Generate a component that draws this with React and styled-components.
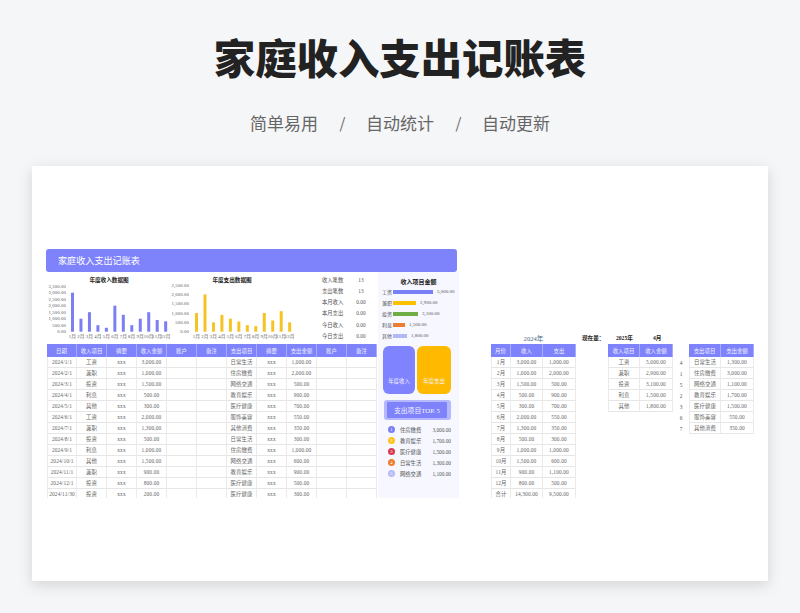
import React from 'react';
import styled, { createGlobalStyle } from 'styled-components';

const serif = `"Liberation Serif", "Noto Sans CJK SC", serif`;
const sans = `"Noto Sans CJK SC", "Liberation Sans", sans-serif`;

const GlobalStyle = createGlobalStyle`
  html, body {
    margin: 0;
    padding: 0;
    background: #f5f6f8;
  }
`;

const Page = styled.div`
  width: 800px;
  height: 613px;
  overflow: hidden;
  background: #f5f6f8;
  font-family: ${sans};
`;

const Hero = styled.header`
  height: 166px;
  display: flex;
  flex-direction: column;
  align-items: center;
`;

const Title = styled.h1`
  margin: 22px 0 0;
  font-size: 41.4px;
  line-height: 68px;
  font-weight: 900;
  color: #222;
`;

const Tagline = styled.div`
  margin-top: 20px;
  display: flex;
  align-items: center;
  gap: 21.5px;
  font-size: 17px;
  line-height: 26px;
  color: #666;
`;

const Slash = styled.span`
  font-size: 15px;
  width: 5px;
  text-align: center;
`;

const Sheet = styled.main`
  margin: 0 32px;
  height: 415px;
  box-sizing: border-box;
  padding: 83px 0 0 14px;
  background: #fff;
  box-shadow: 0 4px 14px rgba(0, 0, 0, 0.14);
  display: flex;
  align-items: flex-start;
  font-family: ${serif};
  color: #555;
`;

const Workbook = styled.section`
  width: 413px;
  flex: none;
`;

const Banner = styled.div`
  width: 411px;
  height: 23px;
  box-sizing: border-box;
  padding: 0 0 2px 12px;
  display: flex;
  align-items: center;
  background: #7f83fb;
  border-radius: 3px;
  color: #fff;
  font-family: ${sans};
  font-size: 9.1px;
`;

const Body = styled.div`
  display: flex;
  gap: 1px;
`;

const Main = styled.div`
  width: 331px;
  padding-left: 1px;
  box-sizing: border-box;
`;

const ChartRow = styled.div`
  height: 72px;
  display: flex;
`;

const Chart = styled.svg`
  display: block;
  flex: none;
  text {
    font-family: ${serif};
    font-size: 4.7px;
    letter-spacing: 0.15px;
    fill: #555;
  }
  .title {
    font-size: 5.6px;
    letter-spacing: 0;
    font-weight: 700;
    fill: #222;
  }
`;

const Stats = styled.div`
  margin-left: 24px;
  padding-top: 2.6px;
  width: 56px;
  display: grid;
  grid-template-columns: 24px 30px;
  grid-auto-rows: 11.1px;
  align-items: center;
  font-size: 5.3px;
  color: #555;
`;

const StatValue = styled.span`
  text-align: center;
`;

const Table = styled.div`
  display: grid;
  grid-template-columns: ${(p) => p.$cols};
  grid-template-rows: 13px;
  grid-auto-rows: 11px;
  height: ${(p) => (p.$height ? `${p.$height}px` : 'auto')};
  overflow: hidden;
  align-content: start;
`;

const HeadCell = styled.div`
  display: flex;
  align-items: center;
  justify-content: center;
  background: #7f83fb;
  border-right: 1px solid #a9acfc;
  box-sizing: border-box;
  color: #f2f2ff;
  font-size: 5.4px;
`;

const Cell = styled.div`
  display: flex;
  align-items: center;
  justify-content: center;
  box-sizing: border-box;
  border-right: 1px solid #ebebeb;
  border-bottom: 1px solid #e6e6e6;
  font-size: 5.4px;
  letter-spacing: 0.12px;
  white-space: nowrap;
  color: #666;
  &:nth-child(${(p) => p.$cols}n + 1) {
    border-left: 1px solid #ebebeb;
  }
`;

const Panel = styled.aside`
  width: 81px;
  height: 226px;
  box-sizing: border-box;
  background: #f6f7ff;
  padding: 6px 8px 0 4px;
  flex: none;
`;

const PanelTitle = styled.div`
  text-align: center;
  font-family: ${sans};
  font-size: 6px;
  line-height: 8px;
  font-weight: 700;
  color: #222;
  margin-left: 4px;
`;

const BarList = styled.div`
  display: grid;
  grid-auto-rows: 11px;
`;

const BarRow = styled.div`
  display: flex;
  align-items: center;
  font-size: 5px;
  color: #555;
`;

const BarLabel = styled.span`
  width: 11px;
  flex: none;
`;

const Bar = styled.span`
  height: 4px;
  margin-right: 4px;
  background: ${(p) => p.$color};
`;

const Cards = styled.div`
  margin: 5px 0 0 1px;
  display: flex;
  gap: 2px;
`;

const Card = styled.div`
  width: ${(p) => p.$width}px;
  height: 48px;
  box-sizing: border-box;
  padding-bottom: 9px;
  display: flex;
  align-items: flex-end;
  justify-content: center;
  background: ${(p) => p.$color};
  border-radius: 6px;
  color: #f4f4ff;
  font-size: 5.4px;
`;

const TopBadge = styled.div`
  margin: 6px 0 0 2px;
  width: 67px;
  height: 20px;
  box-sizing: border-box;
  padding: 2px 4px 2px 3px;
  background: #b5b8fb;
  border-radius: 3px;
`;

const TopLabel = styled.div`
  height: 100%;
  display: flex;
  align-items: center;
  justify-content: center;
  background: #7f83fb;
  border-radius: 1px;
  color: #f4f4ff;
  font-size: 6.8px;
`;

const RankList = styled.div`
  margin: 4px 0 0 6px;
  display: grid;
  grid-auto-rows: 11px;
`;

const RankRow = styled.div`
  display: flex;
  align-items: center;
  font-size: 5.3px;
  color: #555;
`;

const RankDot = styled.span`
  width: 7px;
  height: 7px;
  margin-right: 5px;
  flex: none;
  border-radius: 50%;
  background: ${(p) => p.$color};
  color: #fff;
  font-size: 4.6px;
  line-height: 7px;
  text-align: center;
`;

const RankValue = styled.span`
  margin-left: auto;
`;

const Side = styled.div`
  margin: 82px 0 0 32px;
  display: flex;
  align-items: flex-start;
`;

const YearColumn = styled.div`
  width: 85px;
  flex: none;
`;

const Caption = styled.div`
  height: 13px;
  display: flex;
  align-items: center;
  font-size: ${(p) => p.$size || 5.6}px;
  color: ${(p) => p.$color || '#222'};
  font-weight: ${(p) => p.$weight || 700};
  justify-content: ${(p) => (p.$center ? 'center' : 'flex-start')};
`;

const CaptionPart = styled.span`
  width: ${(p) => p.$width}px;
  flex: none;
`;

const NowColumn = styled.div`
  margin-left: 6px;
`;

const NowTables = styled.div`
  margin-left: 26px;
  display: flex;
`;

const RankColumn = styled.div`
  width: 16px;
  display: grid;
  grid-template-rows: 13px;
  grid-auto-rows: 11px;
  align-items: center;
  justify-items: center;
  font-size: 5.4px;
  color: #555;
`;

const BarChart = ({ title, titleX, width, ticks, unit, base, axisX, startX, color, values }) => (
  <Chart width={width} height={72} viewBox={`0 0 ${width} 72`}>
    <text className="title" x={titleX} y={10} textAnchor="middle">{title}</text>
    {ticks.map((t, i) => (
      <text key={t} x={axisX} y={base + 1.6 - i * unit} textAnchor="end">{t}</text>
    ))}
    {values.map((v, i) => {
      const h = (v / 500) * unit;
      return <rect key={i} x={startX + i * 8.47} y={base - h} width={3} height={h} fill={color} />;
    })}
    {values.map((_, i) => (
      <text key={i} x={startX + 1.5 + i * 8.47} y={65.6} textAnchor="middle">{i + 1}月</text>
    ))}
  </Chart>
);

const DataTable = ({ cols, count, head, rows, height }) => (
  <Table $cols={cols} $height={height}>
    {head.map((h, i) => <HeadCell key={i}>{h}</HeadCell>)}
    {rows.flat().map((c, i) => <Cell key={i} $cols={count}>{c}</Cell>)}
  </Table>
);

const income = [
  ['2024/1/1', '工资', '3,000.00'], ['2024/2/1', '兼职', '1,000.00'], ['2024/3/1', '投资', '1,500.00'],
  ['2024/4/1', '利息', '500.00'], ['2024/5/1', '其他', '300.00'], ['2024/6/1', '工资', '2,000.00'],
  ['2024/7/1', '兼职', '1,300.00'], ['2024/8/1', '投资', '500.00'], ['2024/9/1', '利息', '1,000.00'],
  ['2024/10/1', '其他', '1,500.00'], ['2024/11/1', '兼职', '900.00'], ['2024/12/1', '投资', '800.00'],
  ['2024/11/30', '投资', '200.00'],
];

const expense = [
  ['日常生活', '1,000.00'], ['住房缴费', '2,000.00'], ['网络交通', '500.00'], ['教育娱乐', '900.00'],
  ['医疗健康', '700.00'], ['服饰美容', '550.00'], ['其他消费', '350.00'], ['日常生活', '300.00'],
  ['住房缴费', '1,000.00'], ['网络交通', '600.00'], ['教育娱乐', '900.00'], ['医疗健康', '500.00'],
  ['医疗健康', '300.00'],
];

const ledger = income.map((r, i) => [
  r[0], r[1], 'xxx', r[2], '', '', expense[i][0], 'xxx', expense[i][1], '', '',
]);

const months = [
  ['1月', '3,000.00', '1,000.00'], ['2月', '1,000.00', '2,000.00'], ['3月', '1,500.00', '500.00'],
  ['4月', '500.00', '900.00'], ['5月', '300.00', '700.00'], ['6月', '2,000.00', '550.00'],
  ['7月', '1,300.00', '350.00'], ['8月', '500.00', '300.00'], ['9月', '1,000.00', '1,000.00'],
  ['10月', '1,500.00', '600.00'], ['11月', '900.00', '1,100.00'], ['12月', '800.00', '500.00'],
  ['合计', '14,300.00', '9,500.00'],
];

const incomeItems = [
  ['工资', '5,000.00'], ['兼职', '2,900.00'], ['投资', '3,100.00'], ['利息', '1,500.00'], ['其他', '1,800.00'],
];

const expenseItems = [
  ['日常生活', '1,300.00'], ['住房缴费', '3,000.00'], ['网络交通', '1,100.00'], ['教育娱乐', '1,700.00'],
  ['医疗健康', '1,500.00'], ['服饰美容', '550.00'], ['其他消费', '350.00'],
];

const incomeBars = [
  { label: '工资', value: '5,000.00', width: 40, color: '#7b7ff5' },
  { label: '兼职', value: '2,900.00', width: 23, color: '#ffc000' },
  { label: '投资', value: '3,100.00', width: 25, color: '#70ad47' },
  { label: '利息', value: '1,500.00', width: 12, color: '#ed7d31' },
  { label: '其他', value: '1,800.00', width: 14, color: '#b4b8f8' },
];

const topFive = [
  { name: '住房缴费', value: '3,000.00', color: '#7b7ff5' },
  { name: '教育娱乐', value: '1,700.00', color: '#ffc21a' },
  { name: '医疗健康', value: '1,500.00', color: '#d8384e' },
  { name: '日常生活', value: '1,300.00', color: '#ed7d31' },
  { name: '网络交通', value: '1,100.00', color: '#b8bbf8' },
];

const stats = [
  ['收入笔数', '13'], ['支出笔数', '13'], ['本月收入', '0.00'],
  ['本月支出', '0.00'], ['今日收入', '0.00'], ['今日支出', '0.00'],
];

export default function App() {
  return (
    <Page>
      <GlobalStyle />
      <Hero>
        <Title>家庭收入支出记账表</Title>
        <Tagline>
          <span>简单易用</span>
          <Slash>/</Slash>
          <span>自动统计</span>
          <Slash>/</Slash>
          <span>自动更新</span>
        </Tagline>
      </Hero>
      <Sheet>
        <Workbook>
          <Banner>家庭收入支出记账表</Banner>
          <Body>
            <Main>
              <ChartRow>
                <BarChart
                  title="年度收入数据图"
                  titleX={62}
                  width={124}
                  ticks={['0.00', '500.00', '1,000.00', '1,500.00', '2,000.00', '2,500.00', '3,000.00', '3,500.00']}
                  unit={6.5}
                  base={59.7}
                  axisX={19}
                  startX={24}
                  color="#7b7ff0"
                  values={[3000, 1000, 1500, 500, 300, 2000, 1300, 500, 1000, 1500, 900, 800]}
                />
                <BarChart
                  title="年度支出数据图"
                  titleX={61}
                  width={127}
                  ticks={['0.00', '500.00', '1,000.00', '1,500.00', '2,000.00', '2,500.00']}
                  unit={9.33}
                  base={59.7}
                  axisX={18}
                  startX={24}
                  color="#f5c324"
                  values={[1000, 2000, 500, 900, 700, 550, 350, 300, 1000, 600, 1100, 500]}
                />
                <Stats>
                  {stats.map(([k, v]) => (
                    <React.Fragment key={k}>
                      <span>{k}</span>
                      <StatValue>{v}</StatValue>
                    </React.Fragment>
                  ))}
                </Stats>
              </ChartRow>
              <DataTable
                cols="repeat(11, 30px)"
                count={11}
                height={154}
                head={['日期', '收入项目', '摘要', '收入金额', '账户', '备注', '支出项目', '摘要', '支出金额', '账户', '备注']}
                rows={ledger}
              />
            </Main>
            <Panel>
              <PanelTitle>收入项目金额</PanelTitle>
              <BarList>
                {incomeBars.map((b) => (
                  <BarRow key={b.label}>
                    <BarLabel>{b.label}</BarLabel>
                    <Bar $color={b.color} style={{ width: b.width }} />
                    {b.value}
                  </BarRow>
                ))}
              </BarList>
              <Cards>
                <Card $width={32} $color="#7f83ff">年度收入</Card>
                <Card $width={34} $color="#ffba00">年度支出</Card>
              </Cards>
              <TopBadge>
                <TopLabel>支出项目TOP. 5</TopLabel>
              </TopBadge>
              <RankList>
                {topFive.map((t, i) => (
                  <RankRow key={t.name}>
                    <RankDot $color={t.color}>{i + 1}</RankDot>
                    {t.name}
                    <RankValue>{t.value}</RankValue>
                  </RankRow>
                ))}
              </RankList>
            </Panel>
          </Body>
        </Workbook>
        <Side>
          <YearColumn>
            <Caption $center $size={6.6} $color="#4a6a8a" $weight={400}>2024年</Caption>
            <DataTable
              cols="20px 32px 33px"
              count={3}
              height={154}
              head={['月份', '收入', '支出']}
              rows={months}
            />
          </YearColumn>
          <NowColumn>
            <Caption>
              <CaptionPart $width={34}>现在是：</CaptionPart>
              <CaptionPart $width={37}>2025年</CaptionPart>
              <CaptionPart $width={12}>4月</CaptionPart>
            </Caption>
            <NowTables>
              <DataTable
                cols="32px 33px"
                count={2}
                head={['收入项目', '收入金额']}
                rows={incomeItems}
              />
              <RankColumn>
                <span />
                {[4, 1, 5, 2, 3, 6, 7].map((n) => <span key={n}>{n}</span>)}
              </RankColumn>
              <DataTable
                cols="32px 33px"
                count={2}
                head={['支出项目', '支出金额']}
                rows={expenseItems}
              />
            </NowTables>
          </NowColumn>
        </Side>
      </Sheet>
    </Page>
  );
}
